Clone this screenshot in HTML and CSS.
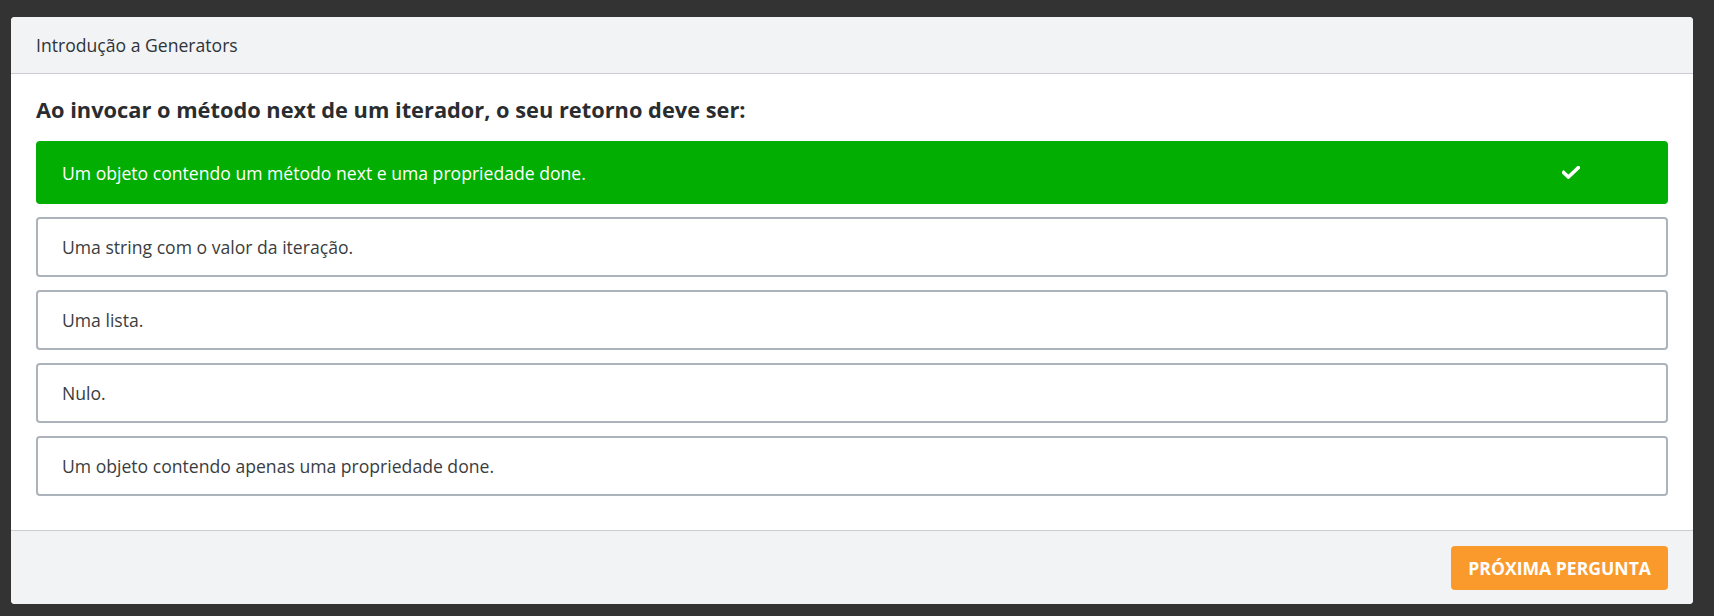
FILE: index.html
```html
<!DOCTYPE html>
<html lang="pt-BR">
<head>
<meta charset="utf-8">
<title>Introdução a Generators</title>
<link rel="stylesheet" href="styles.css">
</head>
<body>
<div class="page">
  <section class="card">
    <header class="card-header">Introdução a Generators</header>
    <div class="card-body">
      <h2 class="question">Ao invocar o método next de um iterador, o seu retorno deve ser:</h2>
      <ul class="options">
        <li class="option correct">
          <span class="option-text">Um objeto contendo um método next e uma propriedade done.</span>
          <svg class="check" viewBox="0 0 18 13" width="18" height="13" aria-hidden="true"><path d="M1.6 6.6 L6.4 11 L16.4 1.6" fill="none" stroke="#fff" stroke-width="3.6" stroke-linecap="square" stroke-linejoin="miter"/></svg>
        </li>
        <li class="option"><span class="option-text">Uma string com o valor da iteração.</span></li>
        <li class="option"><span class="option-text">Uma lista.</span></li>
        <li class="option"><span class="option-text">Nulo.</span></li>
        <li class="option"><span class="option-text">Um objeto contendo apenas uma propriedade done.</span></li>
      </ul>
    </div>
    <footer class="card-footer">
      <button class="next-btn" type="button">PRÓXIMA PERGUNTA</button>
    </footer>
  </section>
</div>
</body>
</html>
```
FILE: styles.css
```css
* { box-sizing: border-box; }
html, body { margin: 0; padding: 0; }
body {
  background: #333333;
  font-family: "Open Sans", "Liberation Sans", sans-serif;
  color: #333;
}
.page {
  padding: 17px 21px 12px 11px;
}
.card {
  background: #ffffff;
  border-radius: 4px;
  overflow: hidden;
}
.card-header {
  height: 57px;
  background: #f2f3f5;
  border-bottom: 1px solid #cbcdd1;
  padding: 0 25px;
  display: flex;
  align-items: center;
  font-size: 17.6px;
  color: #2e3338;
}
.card-body {
  padding: 21px 25px 34px;
}
.question {
  margin: 0 0 16px;
  font-size: 21.8px;
  font-weight: 700;
  line-height: 30px;
  color: #2a2d30;
}
.options {
  list-style: none;
  margin: 0;
  padding: 0;
  display: flex;
  flex-direction: column;
  gap: 13px;
}
.option {
  height: 60px;
  border: 2px solid #adb3ba;
  border-radius: 4px;
  padding: 0 24px;
  display: flex;
  align-items: center;
  justify-content: space-between;
  font-size: 17.6px;
  color: #3a3d40;
}
.option.correct {
  height: 63px;
  background: #02ae02;
  border-color: #02ae02;
  color: #ffffff;
  padding-right: 86px;
}
.check { display: block; }
.card-footer {
  background: #f2f3f5;
  border-top: 1px solid #cbcdd1;
  padding: 15px 25px 14px;
  display: flex;
  justify-content: flex-end;
}
.next-btn {
  height: 44px;
  padding: 0 17px;
  background: #fb9a2c;
  border: none;
  border-radius: 4px;
  color: #ffffff;
  font-family: "Open Sans", "Liberation Sans", sans-serif;
  font-weight: 700;
  font-size: 17.6px;
}
```
